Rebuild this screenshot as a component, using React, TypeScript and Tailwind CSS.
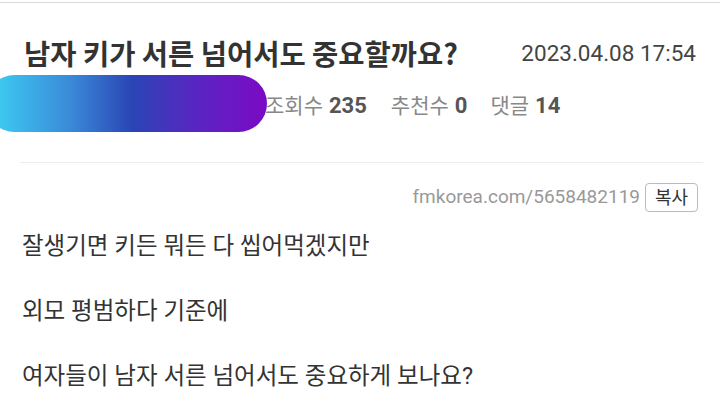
import React from "react";

export default function App() {
  const kr = { fontFamily: "Roboto, 'Noto Sans CJK KR', sans-serif" };
  return (
    <div className="relative w-[720px] h-[412px] overflow-hidden bg-white" style={kr}>
      <div className="h-[2px]" />
      <div className="h-px bg-[#dadada]" />
      <div className="px-6 pt-[33px]">
        <div className="flex items-center justify-between">
          <h1 className="text-[28.5px] font-bold leading-[34px] text-[#333]" style={{ fontFamily: "'Noto Sans CJK KR', sans-serif" }}>
            남자 키가 서른 넘어서도 중요할까요?
          </h1>
          <span className="text-[22.5px] leading-[34px] text-[#444]">2023.04.08 17:54</span>
        </div>
        <div className="mt-[21px] flex items-center pl-[241px] leading-[30px]">
          <span className="text-[21px] text-[#888]">조회수</span>
          <span className="ml-[6px] text-[22px] font-bold text-[#555]">235</span>
          <span className="ml-[24px] text-[21px] text-[#888]">추천수</span>
          <span className="ml-[6px] text-[22px] font-bold text-[#555]">0</span>
          <span className="ml-[23px] text-[21px] text-[#888]">댓글</span>
          <span className="ml-[6px] text-[22px] font-bold text-[#555]">14</span>
        </div>
      </div>
      <div className="mt-[41px] ml-[20px] mr-[17px] h-px bg-[#ececec]" />
      <div className="mt-[20px] flex items-center justify-end pr-[22px]">
        <span className="text-[19px] text-[#999]">fmkorea.com/5658482119</span>
        <span className="ml-[5px] flex h-[29px] w-[53px] items-center justify-center rounded-[4px] border border-[#bbb] text-[18px] text-[#333]">
          복사
        </span>
      </div>
      <div className="mt-[18px] pl-[22px] text-[23.5px] leading-[33px] text-[#333]">
        <p className="mb-[32px]">잘생기면 키든 뭐든 다 씹어먹겠지만</p>
        <p className="mb-[32px]">외모 평범하다 기준에</p>
        <p>여자들이 남자 서른 넘어서도 중요하게 보나요?</p>
      </div>
      <div
        className="absolute left-[-14px] top-[75px] h-[57px] w-[281px] rounded-full"
        style={{ background: "linear-gradient(90deg, #3dd3f5 0%, #3a8ad8 30%, #2a45b5 52%, #5a25c2 75%, #7b0ac4 100%)" }}
      />
    </div>
  );
}
